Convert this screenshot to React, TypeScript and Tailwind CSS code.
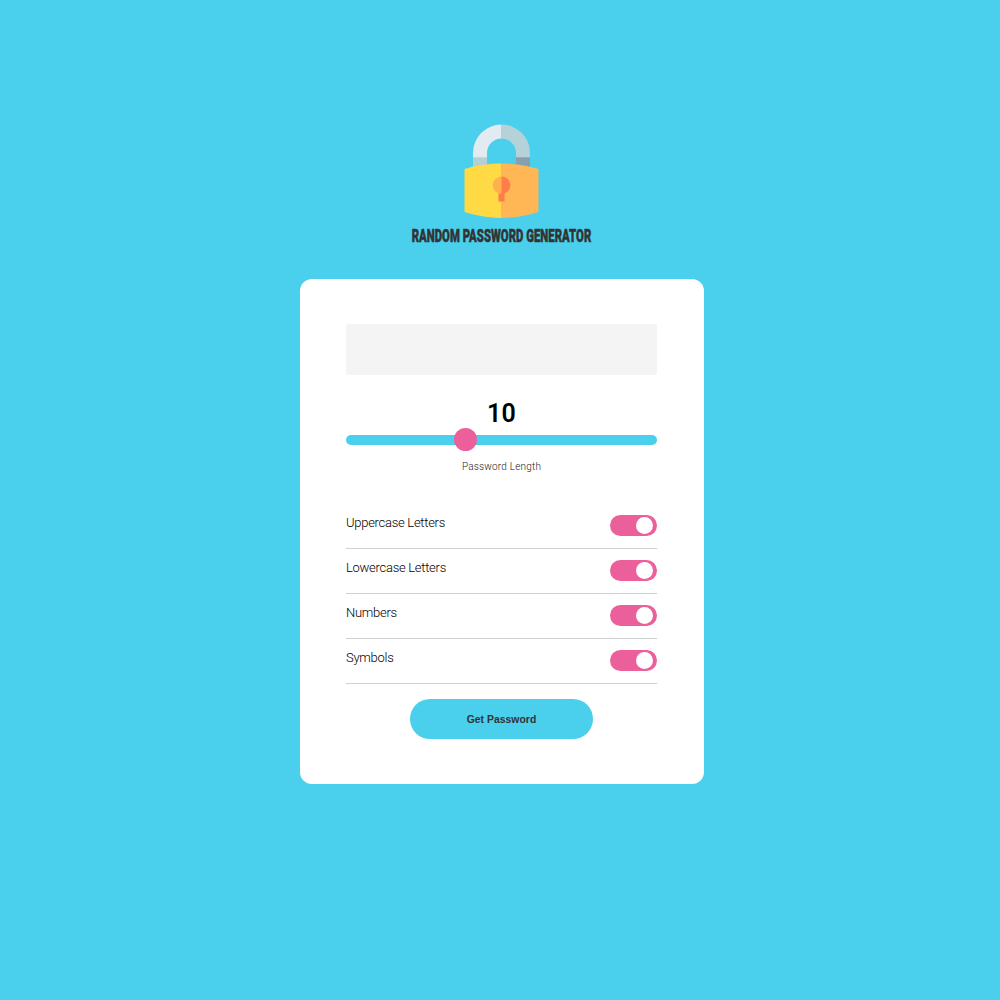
import { useState } from "react";

const options = ["Uppercase Letters", "Lowercase Letters", "Numbers", "Symbols"];

function Padlock() {
  return (
    <svg className="h-[94px] w-[75px]" viewBox="0 0 75 94" aria-hidden="true">
      <path d="M9 45V29A28.5 28.5 0 0 1 37.5 0.5V14.5A14.5 14.5 0 0 0 23 29V45Z" fill="#e1ebf1" />
      <path d="M37.5 0.5A28.5 28.5 0 0 1 66 29V45H52V29A14.5 14.5 0 0 0 37.5 14.5Z" fill="#b4d2d8" />
      <path d="M9 33.3H23V45H9Z" fill="#b4d0d6" />
      <path d="M52 33.3H66V45H52Z" fill="#889fae" />
      <path d="M0.5 45Q18 39.5 37.5 39.5V94Q17 93.5 0.5 88Z" fill="#ffda45" />
      <path d="M37.5 39.5Q57 39.5 74.5 45V88Q58 93.5 37.5 94Z" fill="#ffb655" />
      <path d="M37.5 52.5A8.75 8.75 0 0 0 37.5 70Z" fill="#ffb04f" />
      <path d="M37.5 52.5A8.75 8.75 0 0 1 40.5 69.5V77.5H34.5V69.5H37.5Z" fill="#ff7d49" />
    </svg>
  );
}

export default function App() {
  const [length, setLength] = useState(10);
  const [enabled, setEnabled] = useState([true, true, true, true]);

  return (
    <main className="flex min-h-screen flex-col items-center bg-[#4acfed] pt-[124px] pl-[3px] font-['Roboto',sans-serif]">
      <Padlock />
      <h1 className="mt-[6px] flex h-6 w-[181px] items-center justify-center text-[19px] leading-6 font-black whitespace-nowrap text-[#333]">
        <span className="inline-block scale-x-[0.597] [-webkit-text-stroke:0.5px_#333]">RANDOM PASSWORD GENERATOR</span>
      </h1>

      <section className="mt-[31px] flex h-[505px] w-[404px] flex-col items-center rounded-[12px] bg-white px-[46.5px] pt-[45px]">
        <div className="h-[51px] w-full shrink-0 rounded-[2px] bg-[#f4f4f4]" />
        <div className="mt-[23px] text-[25px] leading-8 font-semibold tracking-[0.1px] text-black">{length}</div>
        <input
          type="range"
          min={1}
          max={25}
          value={length}
          aria-label="Password Length"
          onChange={(e) => setLength(Number(e.target.value))}
          className="mt-[5px] block h-[9.5px] w-full shrink-0 appearance-none rounded-full bg-[#4acfed] outline-none [&::-webkit-slider-thumb]:-mt-px [&::-webkit-slider-thumb]:h-[23.5px] [&::-webkit-slider-thumb]:w-[23.5px] [&::-webkit-slider-thumb]:appearance-none [&::-webkit-slider-thumb]:rounded-full [&::-webkit-slider-thumb]:bg-[#eb5f9a]"
        />
        <p className="mt-[14.5px] text-[10px] leading-4 font-light tracking-[0.2px] text-[#222]">Password Length</p>

        <div className="mt-[29px] w-full">
          {options.map((option, i) => (
            <div key={option} className="flex h-[45px] items-start justify-between border-b border-[#d0d0d0] pt-[11px]">
              <span className="text-[13px] leading-4 font-light tracking-[-0.28px] text-black">{option}</span>
              <button
                role="switch"
                aria-checked={enabled[i]}
                aria-label={option}
                onClick={() => setEnabled(enabled.map((v, n) => (n === i ? !v : v)))}
                className={`mt-[0.4px] flex h-[21px] w-[47px] items-start rounded-full px-[4px] pt-[1.3px] ${enabled[i] ? "justify-end bg-[#eb5f9a]" : "justify-start bg-gray-300"}`}
              >
                <span className="size-[17px] rounded-full bg-white" />
              </button>
            </div>
          ))}
        </div>

        <button className="mt-[15px] h-10 w-[183px] shrink-0 rounded-full bg-[#4acfed] pt-[2px] font-['Liberation_Sans',sans-serif] text-[10.4px] font-bold tracking-[0.02px] text-[#333]">
          Get Password
        </button>
      </section>
    </main>
  );
}
